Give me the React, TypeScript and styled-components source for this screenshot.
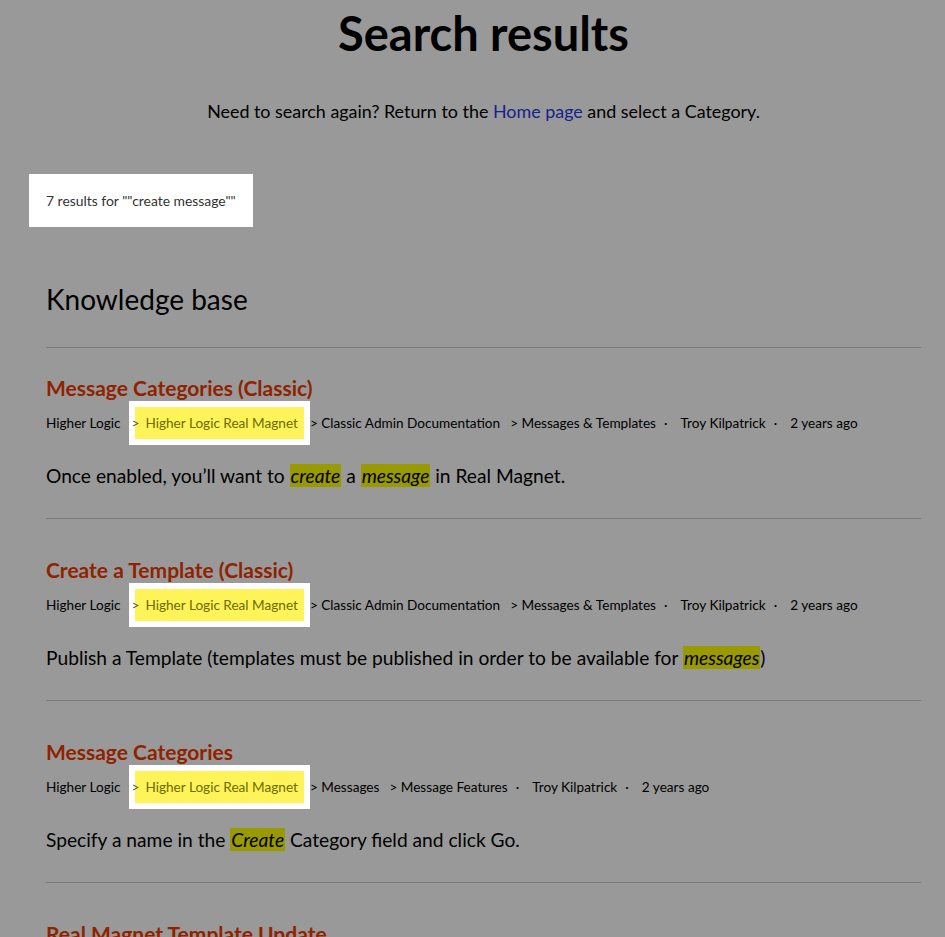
import React from "react";
import styled, { createGlobalStyle } from "styled-components";

const GlobalStyle = createGlobalStyle`
    body {
        margin: 0;
        background: #999999;
        font-family: Lato, "Open Sans", sans-serif;
        color: #000;
    }
`;

interface Match {
    text: string;
    hit?: boolean;
}

interface Result {
    title: string;
    path: string[];
    author: string;
    age: string;
    excerpt: Match[];
}

const results: Result[] = [
    {
        title: "Message Categories (Classic)",
        path: ["Classic Admin Documentation", "Messages & Templates"],
        author: "Troy Kilpatrick",
        age: "2 years ago",
        excerpt: [
            { text: "Once enabled, you’ll want to " },
            { text: "create", hit: true },
            { text: " a " },
            { text: "message", hit: true },
            { text: " in Real Magnet." },
        ],
    },
    {
        title: "Create a Template (Classic)",
        path: ["Classic Admin Documentation", "Messages & Templates"],
        author: "Troy Kilpatrick",
        age: "2 years ago",
        excerpt: [
            {
                text: "Publish a Template (templates must be published in order to be available for ",
            },
            { text: "messages", hit: true },
            { text: ")" },
        ],
    },
    {
        title: "Message Categories",
        path: ["Messages", "Message Features"],
        author: "Troy Kilpatrick",
        age: "2 years ago",
        excerpt: [
            { text: "Specify a name in the " },
            { text: "Create", hit: true },
            { text: " Category field and click Go." },
        ],
    },
    {
        title: "Real Magnet Template Update",
        path: ["Messages"],
        author: "Troy Kilpatrick",
        age: "2 years ago",
        excerpt: [{ text: "Templates" }],
    },
];

const Page = styled.main`
    padding: 8px 24px 0 46px;
`;

const Title = styled.h1`
    margin: 0;
    font-size: 47px;
    line-height: 50px;
    font-weight: 700;
    text-align: center;
`;

const Intro = styled.p`
    margin: 41px 0 0;
    font-size: 17.9px;
    line-height: 24px;
    text-align: center;
`;

const HomeLink = styled.a`
    color: #14238a;
    text-decoration: none;
`;

const CountBox = styled.div`
    display: inline-block;
    margin: 51px 0 0 -17px;
    padding: 17px;
    background: #fff;
    font-size: 13.9px;
    line-height: 19px;
    color: #333;
`;

const SectionTitle = styled.h2`
    margin: 56px 0 0;
    font-size: 28px;
    line-height: 32px;
    font-weight: 400;
    padding-bottom: 32px;
    border-bottom: 1px solid #7a7a7a;
`;

const Item = styled.section`
    padding: 39px 0 30px;
    border-bottom: 1px solid #7a7a7a;

    &:first-child {
        padding-top: 28px;
    }
`;

const ItemTitle = styled.h3`
    margin: 0;
    font-size: 21px;
    line-height: 24px;
    font-weight: 700;
    color: #8f2300;
`;

const Meta = styled.div`
    display: flex;
    align-items: center;
    margin-top: 1px;
    font-size: 13.6px;
    white-space: nowrap;
`;

const Crumb = styled.span`
    margin-right: 10px;
`;

const Spotlight = styled.span`
    display: inline-flex;
    margin: 0 0 0 -2px;
    padding: 6px;
    background: #fff;
`;

const Marked = styled.span`
    display: inline-block;
    padding: 0 6px 0 6px;
    line-height: 32px;
    background: #fff35a;
    color: #6b6b00;
`;

const Caret = styled.span`
    margin-left: -9px;
    margin-right: 6px;
    color: #555;
`;

const Dot = styled.span`
    margin: 0 13px 0 -2px;
`;

const Excerpt = styled.p`
    margin: 19px 0 0;
    font-size: 19.2px;
    line-height: 24px;
`;

const Hit = styled.em`
    background: #999900;
    padding: 0 1px;
`;

const App: React.FC = () => {
    return (
        <Page>
            <GlobalStyle />
            <Title>Search results</Title>
            <Intro>
                Need to search again? Return to the{" "}
                <HomeLink href="#">Home page</HomeLink> and select a Category.
            </Intro>
            <CountBox>7 results for ""create message""</CountBox>
            <SectionTitle>Knowledge base</SectionTitle>
            <div>
                {results.map((r) => (
                    <Item key={r.title}>
                        <ItemTitle>{r.title}</ItemTitle>
                        <Meta>
                            <Crumb>Higher Logic</Crumb>
                            <Spotlight>
                                <Marked>
                                    <Caret>&gt;</Caret>Higher Logic Real Magnet
                                </Marked>
                            </Spotlight>
                            {r.path.map((p) => (
                                <Crumb key={p}>&gt; {p}</Crumb>
                            ))}
                            <Dot>·</Dot>
                            <Crumb>{r.author}</Crumb>
                            <Dot>·</Dot>
                            <Crumb>{r.age}</Crumb>
                        </Meta>
                        <Excerpt>
                            {r.excerpt.map((m, i) =>
                                m.hit ? (
                                    <Hit key={i}>{m.text}</Hit>
                                ) : (
                                    <React.Fragment key={i}>{m.text}</React.Fragment>
                                )
                            )}
                        </Excerpt>
                    </Item>
                ))}
            </div>
        </Page>
    );
};

export default App;
